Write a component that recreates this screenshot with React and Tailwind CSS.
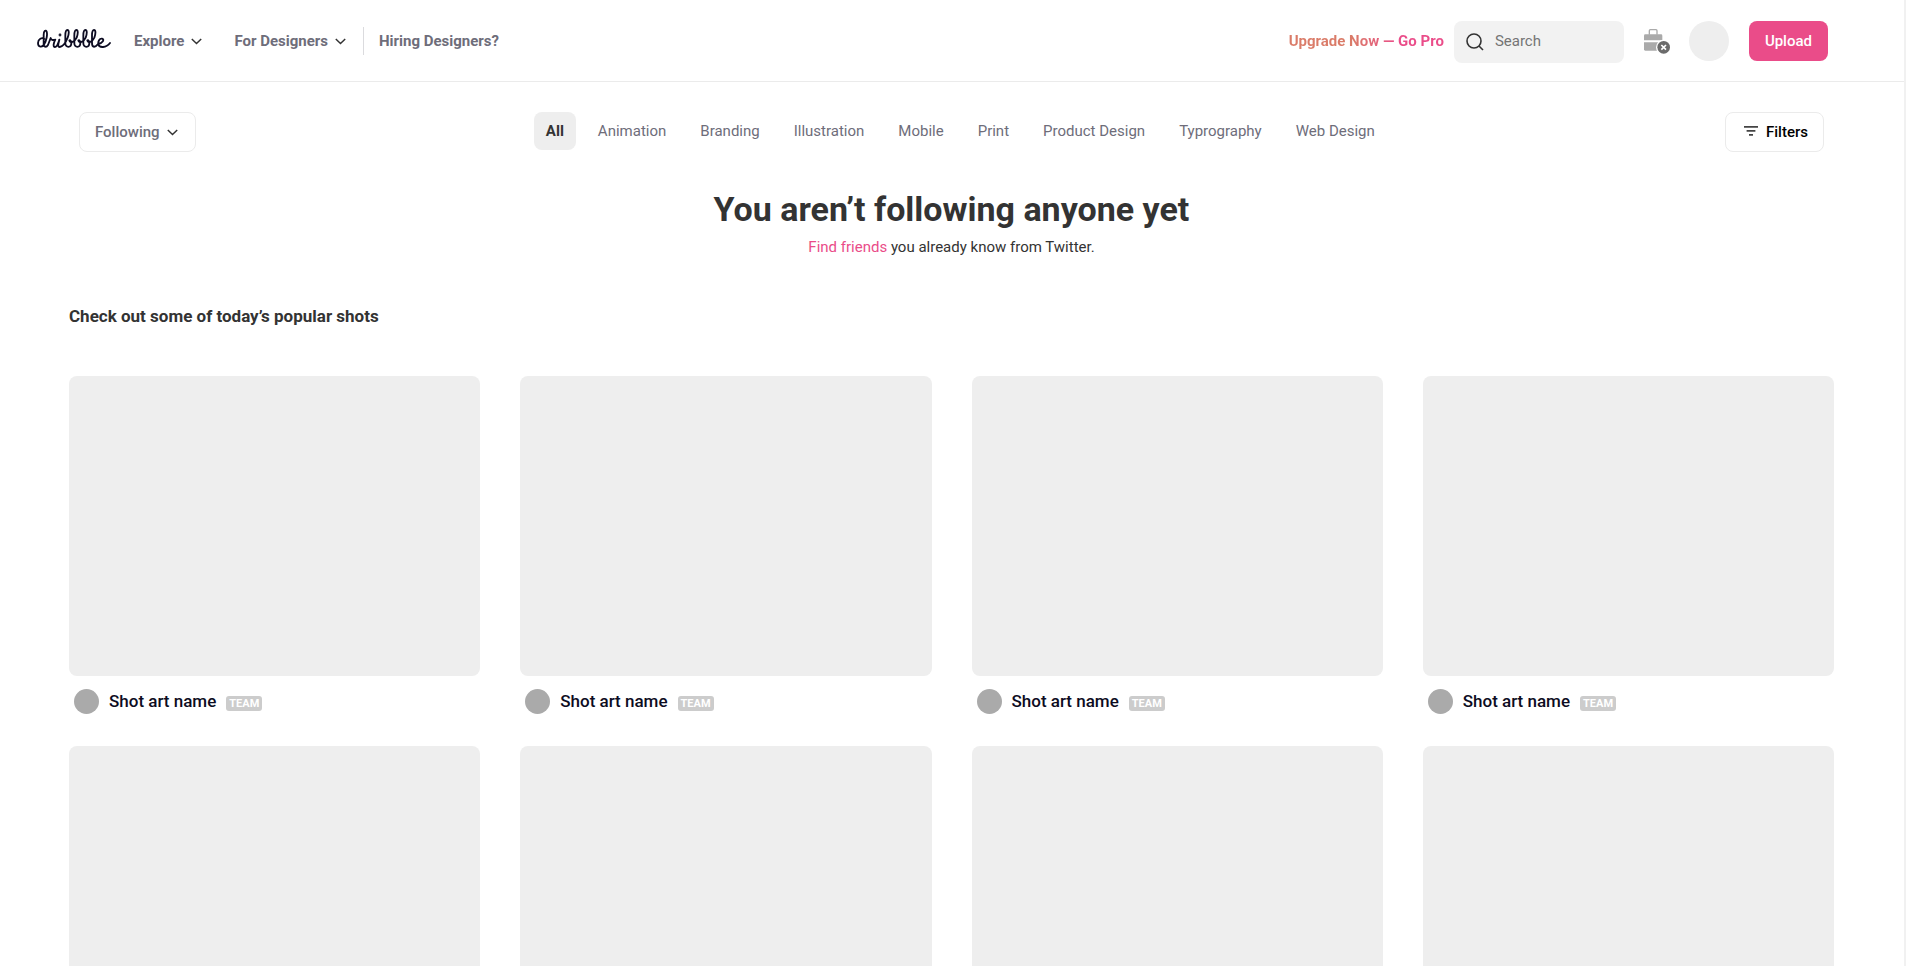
import React from "react";

const categories = [
  "All",
  "Animation",
  "Branding",
  "Illustration",
  "Mobile",
  "Print",
  "Product Design",
  "Typrography",
  "Web Design",
];

const shots = Array.from({ length: 8 }, (_, id) => ({ id, name: "Shot art name" }));

function Logo() {
  return (
    <svg
      viewBox="51 57 222 60"
      className="h-5 w-[74px]"
      fill="none"
      stroke="#0d0c22"
      strokeWidth="5.5"
      strokeLinecap="round"
      strokeLinejoin="round"
      aria-hidden="true"
    >
      <path d="M73 87C66 81 54 87 54 99C54 112 67 114 73 102C79 92 83 74 80 65C77 58 71 63 71 75V101C71 112 79 113 84 105L92 84C92 90 99 91 106 89C101 98 98 111 105 111C111 111 115 99 118 89C115 101 112 111 119 111C128 110 138 96 143 83C148 69 147 60 142 60C137 60 136 67 136 77V100C136 114 154 114 154 99C154 92 150 89 148 91C150 101 164 96 170 83C175 69 174 60 169 60C164 60 163 67 163 77V100C163 114 181 114 181 99C181 92 177 89 175 91C177 101 191 96 197 83C202 69 201 60 196 60C191 60 190 67 190 77V100C190 114 208 114 208 99C208 92 204 89 202 91C204 101 217 96 223 83C228 69 227 60 222 60C217 60 216 67 216 77V99C216 114 226 113 234 102C249 99 254 88 246 86C238 85 234 94 235 102C237 115 259 114 270 99" />
      <circle cx="120" cy="75" r="1.5" />
    </svg>
  );
}

function Chevron() {
  return (
    <svg viewBox="0 0 11 7" className="h-[7px] w-[11px]" fill="none" stroke="#333" strokeWidth="1.5" aria-hidden="true">
      <path d="M.8 1l4.7 4.5L10.2 1" />
    </svg>
  );
}

function Briefcase() {
  return (
    <svg viewBox="72 42 78 75" className="h-[25px] w-[26px]" aria-hidden="true">
      <path d="M88 59V47q0-3 3-3h17q3 0 3 3v12" fill="none" stroke="#aaa" strokeWidth="4" />
      <path d="M76 58h47q4 0 4 4v14H72V62q0-4 4-4z" fill="#aaa" />
      <path d="M72 82h55v25H76q-4 0-4-4z" fill="#aaa" />
      <circle cx="131" cy="97" r="23" fill="#fff" />
      <circle cx="131" cy="97" r="19" fill="#6b6b6b" />
      <path d="M124 90l14 14M138 90l-14 14" stroke="#fff" strokeWidth="5" />
    </svg>
  );
}

function Header() {
  return (
    <header className="flex items-start justify-between border-b border-[#ebebeb] pt-[21px] pr-[76px] pb-[18px] pl-[37px] text-[15px] leading-5">
      <div className="flex h-10 items-center">
        <a href="#home" aria-label="dribbble" className="pb-1">
          <Logo />
        </a>
        <nav className="ml-[23px] flex items-center font-bold text-[#6e6d7a]">
          <button type="button" className="flex items-center gap-[7px]">
            Explore
            <Chevron />
          </button>
          <button type="button" className="ml-8 flex items-center gap-[7px]">
            For Designers
            <Chevron />
          </button>
          <a href="#hiring" className="ml-[17px] flex h-7 items-center border-l border-[#dbdbde] pl-[15px]">
            Hiring Designers?
          </a>
        </nav>
      </div>
      <div className="flex items-start">
        <a
          href="#pro"
          className="bg-linear-to-r from-[#da7b68] from-40% to-[#ea4c89] to-70% bg-clip-text leading-10 font-bold text-transparent"
        >
          Upgrade Now — Go Pro
        </a>
        <label className="ml-[10px] flex h-[42px] w-[170px] items-center rounded-lg bg-[#f2f2f2] pl-3">
          <svg viewBox="0 0 18 18" className="h-[18px] w-[18px] shrink-0" fill="none" stroke="#333" strokeWidth="1.6" aria-hidden="true">
            <circle cx="8" cy="8" r="7" />
            <path d="M13 13l4 4" />
          </svg>
          <input
            type="search"
            placeholder="Search"
            aria-label="Search"
            className="ml-[11px] w-full min-w-0 bg-transparent pb-[2px] outline-none placeholder:text-[#757575]"
          />
        </label>
        <button type="button" aria-label="Work status" className="ml-5 flex h-10 items-center">
          <Briefcase />
        </button>
        <button type="button" aria-label="Profile" className="ml-[19px] h-10 w-10 rounded-full bg-[#eee]" />
        <button type="button" className="ml-5 h-10 rounded-lg bg-[#ea4c89] px-4 font-medium text-white">
          Upload
        </button>
      </div>
    </header>
  );
}

function Toolbar() {
  return (
    <div className="flex items-start justify-between px-[10px] text-[15px] leading-5">
      <button
        type="button"
        className="flex h-10 items-center gap-[7px] rounded-lg border border-[#ebebeb] pr-[17px] pl-[15px] font-medium text-[#6e6d7a]"
      >
        Following
        <Chevron />
      </button>
      <nav className="flex gap-[10px]">
        {categories.map((c, i) => (
          <a
            key={c}
            href="#shots"
            className={
              i === 0
                ? "flex h-[38px] items-center rounded-lg bg-[#eee] px-3 font-bold text-[#333]"
                : "flex h-[38px] items-center rounded-lg px-3 text-[#6e6d7a]"
            }
          >
            {c}
          </a>
        ))}
      </nav>
      <button
        type="button"
        className="flex h-10 items-center gap-2 rounded-lg border border-[#ebebeb] pr-[15px] pl-[18px] font-medium text-black"
      >
        <svg viewBox="0 0 14 10" className="mb-[2px] h-[10px] w-[14px]" fill="#444" aria-hidden="true">
          <path d="M0 0h14v1.7H0zM2.600 4h8.800v1.700H2.600zM5 8h4v1.700H5z" />
        </svg>
        Filters
      </button>
    </div>
  );
}

function ShotCard({ name }) {
  return (
    <article>
      <div className="h-[300px] rounded-lg bg-[#eee]" />
      <div className="mt-[13px] flex h-[25px] items-center pl-[5px]">
        <span className="h-[25px] w-[25px] rounded-full bg-[#aaa]" />
        <span className="ml-[10px] pb-[2px] text-[17px] leading-6 font-medium text-[#0d0c22]">{name}</span>
        <span className="mt-1 ml-[10px] rounded-[3px] bg-[#ccc] px-[3px] text-[11px] leading-[15px] font-bold text-white">
          TEAM
        </span>
      </div>
    </article>
  );
}

export default function App() {
  return (
    <div className="min-h-screen border-r-2 border-[#f1f1f1] bg-white font-[Roboto,sans-serif]">
      <Header />
      <main className="pt-[30px] pr-[70px] pb-8 pl-[69px]">
        <Toolbar />
        <section className="mt-9 text-center text-[#333]">
          <h1 className="text-[34px] leading-[42px] font-bold">You aren’t following anyone yet</h1>
          <p className="mt-[7px] text-[15px] leading-5">
            <a href="#friends" className="text-[#ea4c89]">
              Find friends
            </a>{" "}
            you already know from Twitter.
          </p>
        </section>
        <h2 className="mt-[47px] text-[17px] leading-6 font-bold text-[#333]">
          Check out some of today’s popular shots
        </h2>
        <section id="shots" className="mt-12 grid grid-cols-4 gap-x-10 gap-y-8">
          {shots.map((s) => (
            <ShotCard key={s.id} name={s.name} />
          ))}
        </section>
      </main>
    </div>
  );
}
